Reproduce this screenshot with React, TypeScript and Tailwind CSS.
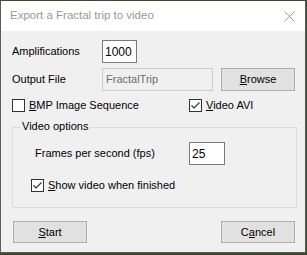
import { ReactNode } from 'react';

const ui = { fontFamily: '"Liberation Sans", Arial, sans-serif' };

function CheckBox({ checked, children }: { checked?: boolean; children: ReactNode }) {
  return (
    <div className="flex items-center">
      <div className="w-[13px] h-[13px] border border-[#333333] bg-white flex items-center justify-center">
        {checked && (
          <svg width="11" height="11" viewBox="0 0 11 11">
            <path d="M1.5 5.5 L4 8 L9.5 2.5" fill="none" stroke="#333333" strokeWidth="1.2" />
          </svg>
        )}
      </div>
      <span className="ml-[4px] text-[11px] leading-none text-black">{children}</span>
    </div>
  );
}

function Button({ children, className = '' }: { children: ReactNode; className?: string }) {
  return (
    <div
      className={`h-[22px] w-[74px] border border-[#adadad] bg-[#e1e1e1] flex items-center justify-center text-[11px] text-black ${className}`}
    >
      {children}
    </div>
  );
}

export default function App() {
  return (
    <div className="w-[307px] h-[255px] bg-[#3d4a2c] pt-px overflow-hidden" style={ui}>
      <div className="w-[306px] h-[252px] bg-[#f0f0f0] border-x border-b border-[#5a5a5a] flex flex-col">
        {/* title bar */}
        <div className="h-[30px] bg-white flex items-center justify-between pl-[9px] pr-[10px] shrink-0">
          <span className="text-[11.5px] text-[#999999]">Export a Fractal trip to video</span>
          <svg width="11" height="11" viewBox="0 0 11 11">
            <path d="M0.5 0.5 L10.5 10.5 M10.5 0.5 L0.5 10.5" stroke="#9a9a9a" strokeWidth="1" />
          </svg>
        </div>

        <div className="pl-[11px] flex flex-col">
          {/* amplifications */}
          <div className="mt-[9px] flex items-center h-[23px]">
            <span className="w-[90px] text-[11px] text-black">Amplifications</span>
            <div className="w-[35px] h-[23px] border border-[#7a7a7a] bg-white text-[12px] flex items-center pl-[2px] text-black">
              1000
            </div>
          </div>

          {/* output file */}
          <div className="mt-[5px] flex items-center h-[23px]">
            <span className="w-[90px] text-[11px] text-black">Output File</span>
            <div className="w-[111px] h-[23px] border border-[#cccccc] bg-[#f0f0f0] text-[11px] flex items-center pl-[3px] text-[#6d6d6d]">
              FractalTrip
            </div>
            <Button className="ml-[8px] h-[23px]">
              <span className="underline">B</span>rowse
            </Button>
          </div>

          {/* checkboxes */}
          <div className="mt-[7px] flex items-center h-[14px]">
            <div className="w-[177px]">
              <CheckBox>
                <span className="underline">B</span>MP Image Sequence
              </CheckBox>
            </div>
            <CheckBox checked>
              <span className="underline">V</span>ideo AVI
            </CheckBox>
          </div>

          {/* group */}
          <div className="relative mt-[15px] w-[285px] h-[81px] border border-[#dcdcdc] pl-[22px]">
            <span className="absolute left-[7px] top-[-7px] bg-[#f0f0f0] px-[2px] text-[11px] leading-none text-black">
              Video options
            </span>
            <div className="mt-[14px] flex items-center h-[23px]">
              <span className="w-[154px] text-[11px] text-black">Frames per second (fps)</span>
              <div className="w-[36px] h-[23px] border border-[#7a7a7a] bg-white text-[12px] flex items-center pl-[2px] text-black">
                25
              </div>
            </div>
            <div className="mt-[14px] -ml-[4px]">
              <CheckBox checked>
                <span className="underline">S</span>how video when finished
              </CheckBox>
            </div>
          </div>

          {/* buttons */}
          <div className="mt-[13px] flex justify-between w-[283px] pl-px">
            <Button>
              <span className="underline">S</span>tart
            </Button>
            <Button>
              C<span className="underline">a</span>ncel
            </Button>
          </div>
        </div>
      </div>
    </div>
  );
}
